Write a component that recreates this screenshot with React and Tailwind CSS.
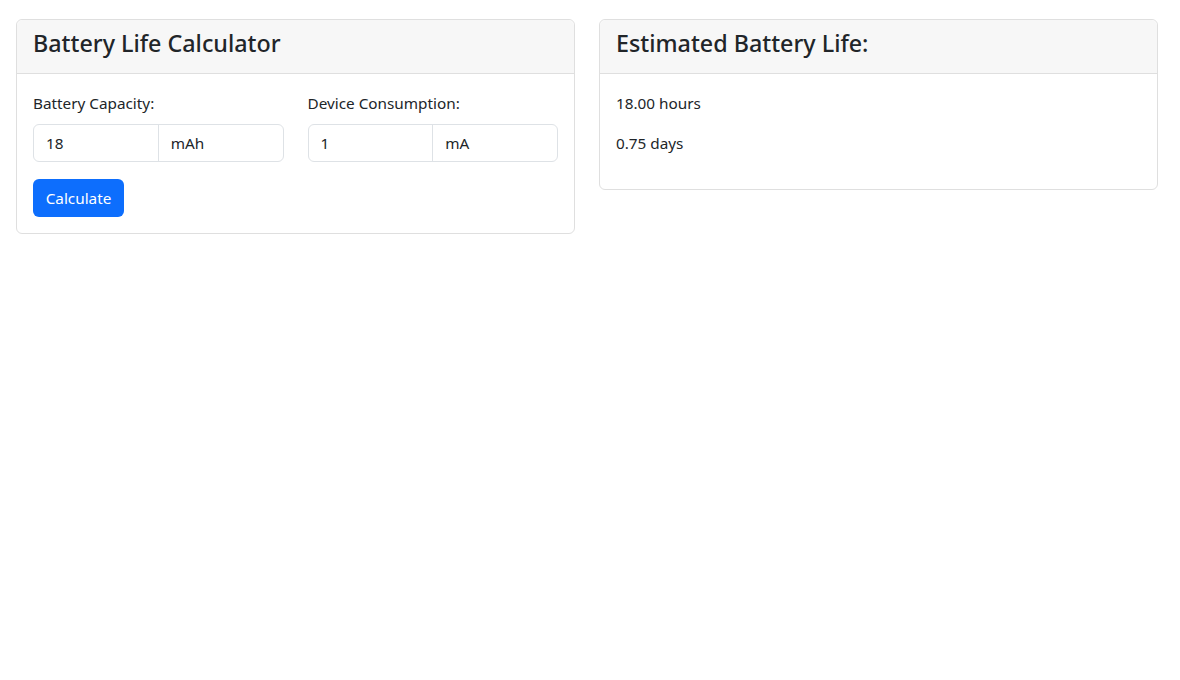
export default function App() {
  const font = { fontFamily: '"Segoe UI", "Noto Sans", "Liberation Sans", sans-serif' };
  return (
    <div className="min-h-[680px] bg-white text-[#212529] text-[15.3px] leading-[24px]" style={font}>
      <div className="flex items-start gap-6 pl-4 pr-[22px] pt-[19px]">
        {/* Calculator card */}
        <div className="w-[559px] shrink-0 rounded-md border border-[#dfdfdf] bg-white">
          <div className="rounded-t-md border-b border-[#dfdfdf] bg-[#f7f7f7] px-4 pt-[9px] pb-[7px]">
            <h4 className="mb-2 text-[23.3px] font-medium leading-[29px]">Battery Life Calculator</h4>
          </div>
          <div className="px-4 pt-[17px] pb-4">
            <div className="mb-[17px] flex gap-6">
              <div className="flex-1">
                <div className="mb-[9px]">Battery Capacity:</div>
                <div className="flex h-[38px] rounded-md border border-[#dee2e6]">
                  <div className="flex flex-1 items-center px-3">18</div>
                  <div className="flex flex-1 items-center border-l border-[#dee2e6] px-3">mAh</div>
                </div>
              </div>
              <div className="flex-1">
                <div className="mb-[9px]">Device Consumption:</div>
                <div className="flex h-[38px] rounded-md border border-[#dee2e6]">
                  <div className="flex flex-1 items-center px-3">1</div>
                  <div className="flex flex-1 items-center border-l border-[#dee2e6] px-3">mA</div>
                </div>
              </div>
            </div>
            <button className="h-[38px] w-[91px] rounded-md bg-[#0d6efd] text-white">Calculate</button>
          </div>
        </div>
        {/* Result card */}
        <div className="w-[559px] shrink-0 rounded-md border border-[#dfdfdf] bg-white">
          <div className="rounded-t-md border-b border-[#dfdfdf] bg-[#f7f7f7] px-4 pt-[9px] pb-[7px]">
            <h4 className="mb-2 text-[23.3px] font-medium leading-[29px]">Estimated Battery Life:</h4>
          </div>
          <div className="px-4 pt-[17px] pb-[18px]">
            <p className="mb-4">18.00 hours</p>
            <p className="mb-4">0.75 days</p>
          </div>
        </div>
      </div>
    </div>
  );
}
